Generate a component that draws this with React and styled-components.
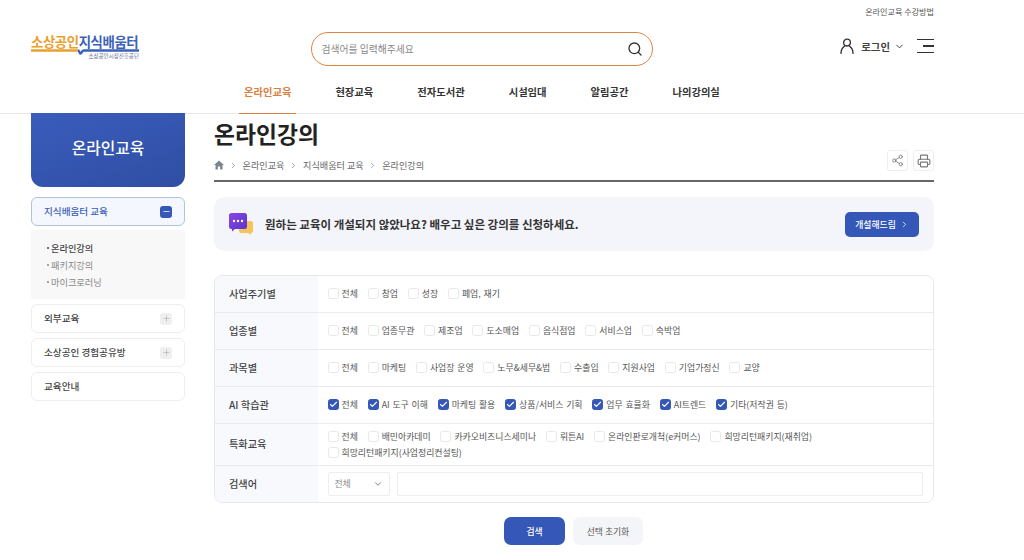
import styled, { createGlobalStyle } from "styled-components";
import { Search, ChevronDown, ChevronRight, Share2, Printer, Plus, Minus, Check } from "lucide-react";

const GlobalStyle = createGlobalStyle`
  html, body {
    margin: 0;
    padding: 0;
    background: #fff;
    font-family: "Noto Sans CJK KR", "Noto Sans", sans-serif;
    color: #333;
  }
  * { box-sizing: border-box; }
`;

const Page = styled.div`
  width: 1024px;
  height: 560px;
  overflow: hidden;
`;

const Header = styled.header`
  height: 114px;
  border-bottom: 1px solid #e9e9e9;
  padding: 0 90px 0 31px;
`;

const UtilRow = styled.div`
  height: 24px;
  padding-bottom: 1px;
  display: flex;
  justify-content: flex-end;
  align-items: center;
  font-size: 8.1px;
  color: #555;
`;

const TopRow = styled.div`
  display: flex;
  align-items: center;
  height: 44px;
  margin-top: 1px;
`;

const Logo = styled.div`
  width: 108px;
  display: flex;
  flex-direction: column;
`;

const LogoTitle = styled.div`
  font-size: 13.4px;
  line-height: 15px;
  font-weight: 700;
  letter-spacing: -0.4px;
  white-space: nowrap;
  color: #3a62b8;
  span { color: #e8a02e; }
`;

const LogoSub = styled.div`
  font-size: 5.5px;
  line-height: 7px;
  color: #5c6b94;
  text-align: right;
  margin-top: -4.5px;
`;

const SearchBox = styled.div`
  width: 342px;
  height: 34px;
  margin-left: 172px;
  margin-top: 4px;
  border: 1.6px solid #dc8445;
  border-radius: 17px;
  padding: 0 9px 0 9.5px;
  display: flex;
  align-items: center;
  justify-content: space-between;
  font-size: 9.8px;
  color: #888;
  svg { color: #333; }
`;

const UserArea = styled.div`
  margin-left: auto;
  margin-bottom: 2px;
  display: flex;
  align-items: center;
  font-size: 10.4px;
  font-weight: 700;
  color: #444;
`;

const LoginLabel = styled.span`
  margin-left: 7px;
  margin-right: 4px;
`;

const MenuButton = styled.div`
  width: 17px;
  height: 15px;
  margin-left: 12px;
  display: flex;
  flex-direction: column;
  justify-content: space-between;
  align-items: flex-end;
`;

const MenuLine = styled.i`
  display: block;
  height: 1.4px;
  background: #333;
  width: ${(p) => p.$w}px;
`;

const Nav = styled.nav`
  height: 45px;
  margin-left: 208px;
  display: flex;
  gap: 34px;
`;

const NavItem = styled.a`
  position: relative;
  padding: 0 5px;
  display: flex;
  align-items: center;
  height: 45px;
  font-size: 10.3px;
  font-weight: 700;
  color: ${(p) => (p.$active ? "#d9803f" : "#333")};
  ${(p) =>
    p.$active &&
    `&::after {
      content: "";
      position: absolute;
      left: 0;
      right: 0;
      bottom: 0;
      height: 1.5px;
      background: #d9803f;
    }`}
`;

const Body = styled.div`
  display: flex;
  padding-left: 31px;
  gap: 29px;
`;

const Sidebar = styled.aside`
  width: 154px;
  flex: none;
`;

const SideHero = styled.div`
  height: 74px;
  margin-top: -1px;
  padding-bottom: 6px;
  border-radius: 0 0 12px 12px;
  background: linear-gradient(160deg, #3a5cbc, #2f4ea3);
  color: #fff;
  display: flex;
  align-items: center;
  justify-content: center;
  font-size: 15.8px;
  font-weight: 500;
  margin-bottom: 10px;
`;

const SideItem = styled.div`
  height: 29px;
  margin-bottom: ${(p) => (p.$open ? 4 : 5)}px;
  padding: 0 12px 2px 12px;
  display: flex;
  align-items: center;
  justify-content: space-between;
  font-size: 9.6px;
  font-weight: 500;
  border-radius: 6px;
  border: 1px solid ${(p) => (p.$open ? "#b4c1de" : "#eeeeee")};
  background: ${(p) => (p.$open ? "#f4f7fd" : "#fff")};
  color: ${(p) => (p.$open ? "#3f62b8" : "#444")};
`;

const SideToggle = styled.span`
  width: 12px;
  height: 12px;
  border-radius: 3px;
  margin-top: 2px;
  display: flex;
  align-items: center;
  justify-content: center;
  background: ${(p) => (p.$open ? "#3557b7" : "#efefef")};
  color: ${(p) => (p.$open ? "#fff" : "#aaa")};
`;

const SubMenu = styled.ul`
  list-style: none;
  margin: 0 0 5px;
  padding: 9px 16px 9px;
  height: 69px;
  background: #f8f8f8;
`;

const SubItem = styled.li`
  height: 17px;
  display: flex;
  align-items: center;
  gap: 2px;
  font-size: 9.2px;
  font-weight: ${(p) => (p.$active ? 500 : 400)};
  color: ${(p) => (p.$active ? "#444" : "#888")};
  &::before {
    content: "";
    width: 2px;
    height: 2px;
    border-radius: 50%;
    background: currentColor;
  }
`;

const Main = styled.main`
  width: 720px;
  flex: none;
`;

const Title = styled.h1`
  margin: 0;
  height: 38px;
  display: flex;
  align-items: center;
  font-size: 22.8px;
  font-weight: 700;
  color: #222;
`;

const CrumbRow = styled.div`
  height: 30px;
  display: flex;
  align-items: center;
  justify-content: space-between;
  border-bottom: 2px solid #666;
  padding-bottom: 2px;
  margin-bottom: 15px;
`;

const Crumbs = styled.div`
  display: flex;
  align-items: center;
  gap: 4.8px;
  font-size: 9.1px;
  color: #666;
  svg { color: #888; }
`;

const Tools = styled.div`
  display: flex;
  gap: 5px;
  margin-top: -9px;
`;

const ToolButton = styled.span`
  width: 21px;
  height: 21px;
  border: 1px solid #eeeeee;
  border-radius: 3px;
  display: flex;
  align-items: center;
  justify-content: center;
  color: #777;
`;

const Banner = styled.div`
  height: 54px;
  background: #f4f5fa;
  border-radius: 10px;
  padding: 0 15px 0 14px;
  display: flex;
  align-items: center;
  margin-bottom: 24px;
`;

const BannerText = styled.p`
  margin: 0 0 0 11px;
  font-size: 11.5px;
  font-weight: 700;
  color: #333;
`;

const BannerButton = styled.a`
  margin-left: auto;
  width: 74px;
  height: 25px;
  border-radius: 5px;
  background: #3557b7;
  color: #fff;
  font-size: 8.8px;
  font-weight: 500;
  display: flex;
  align-items: center;
  justify-content: center;
  gap: 4px;
`;

const FilterTable = styled.div`
  border: 1px solid #e6e8ec;
  border-radius: 8px;
  overflow: hidden;
`;

const Row = styled.div`
  display: flex;
  height: ${(p) => p.$h || 37}px;
  border-bottom: ${(p) => (p.$last ? "none" : "1px solid #e9ebf0")};
`;

const RowLabel = styled.div`
  width: 102.5px;
  flex: none;
  background: #f7f9fd;
  padding: 0 0 2px 14px;
  display: flex;
  align-items: center;
  font-size: 10.2px;
  font-weight: 500;
  color: #444;
`;

const RowBody = styled.div`
  flex: 1;
  padding: 0 10px 1px;
  display: flex;
  flex-wrap: wrap;
  align-items: center;
  align-content: center;
  column-gap: 9.8px;
  row-gap: 0;
`;

const Option = styled.label`
  display: flex;
  align-items: center;
  gap: 3px;
  height: 16px;
  font-size: 8.9px;
  word-spacing: 0.8px;
  color: #555;
  white-space: nowrap;
`;

const Box = styled.span`
  width: 11px;
  height: 11px;
  border-radius: 2.5px;
  display: flex;
  align-items: center;
  justify-content: center;
  border: 1px solid ${(p) => (p.$checked ? "#3557b7" : "#e8e8e8")};
  background: ${(p) => (p.$checked ? "#3557b7" : "#fff")};
  color: #fff;
`;

const SearchFields = styled.div`
  width: 100%;
  display: flex;
  gap: 7px;
`;

const SelectBox = styled.div`
  width: 62px;
  height: 24px;
  border: 1px solid #eeeeee;
  border-radius: 2px;
  padding: 0 6px;
  display: flex;
  align-items: center;
  justify-content: space-between;
  font-size: 8.8px;
  color: #888;
  svg { color: #555; }
`;

const TextInput = styled.div`
  flex: 1;
  height: 24px;
  border: 1px solid #eeeeee;
  border-radius: 2px;
`;

const Actions = styled.div`
  display: flex;
  justify-content: center;
  gap: 8px;
  margin-top: 14px;
  padding-right: 1px;
`;

const ActionButton = styled.a`
  width: ${(p) => p.$w}px;
  height: 28px;
  border-radius: 7px;
  display: flex;
  align-items: center;
  justify-content: center;
  font-size: 8.8px;
  font-weight: ${(p) => (p.$primary ? 500 : 400)};
  background: ${(p) => (p.$primary ? "#3557b7" : "#f4f5f8")};
  color: ${(p) => (p.$primary ? "#fff" : "#555")};
`;

const LogoLine = () => (
  <svg width="108" height="9" viewBox="0 0 108 9">
    <path d="M0 1.500H47" stroke="#e8a02e" strokeWidth="2.4" fill="none" />
    <path d="M47 1.500c2 0 1 3 2.500 3s1-3 3.500-3h55" stroke="#3a62b8" strokeWidth="2.4" fill="none" />
  </svg>
);

const UserIcon = () => (
  <svg width="14" height="16" viewBox="0 0 14 16" fill="none" stroke="#333" strokeWidth="1.3">
    <circle cx="7" cy="4.600" r="3.400" />
    <path d="M1 15.500c0-4 2-6.400 3.600-7.400M13 15.500c0-4-2-6.400-3.600-7.400" strokeLinecap="round" />
  </svg>
);

const HomeIcon = () => (
  <svg width="10" height="10" viewBox="0 0 10 10" fill="#7c8691">
    <path d="M5 .6 0 5h1.500v4.400h2.400V6.500h2.200v2.900h2.400V5H10z" />
  </svg>
);

const ChatIcon = () => (
  <svg width="26" height="24" viewBox="0 0 26 24">
    <defs>
      <linearGradient id="chatGrad" x1="0" y1="0" x2="1" y2="1">
        <stop offset="0" stopColor="#8a45e6" />
        <stop offset="1" stopColor="#5a34c8" />
      </linearGradient>
    </defs>
    <path d="M15 9h8a2 2 0 0 1 2 2v8a2 2 0 0 1-2 2v2l-3-2h-7a2 2 0 0 1-2-2v-8a2 2 0 0 1 2-2z" fill="#f6c458" />
    <path d="M3.500 1h13A2.500 2.500 0 0 1 19 3.500v11a2.500 2.500 0 0 1-2.500 2.500H7l-3 2.500V17h-.5A2.500 2.500 0 0 1 1 14.500v-11A2.500 2.500 0 0 1 3.500 1z" fill="url(#chatGrad)" />
    <circle cx="6" cy="9" r="1.200" fill="#fff" />
    <circle cx="10" cy="9" r="1.200" fill="#fff" />
    <circle cx="14" cy="9" r="1.200" fill="#fff" />
  </svg>
);

const navItems = ["온라인교육", "현장교육", "전자도서관", "시설임대", "알림공간", "나의강의실"];

const filters = [
  { label: "사업주기별", options: ["전체", "창업", "성장", "폐업, 재기"] },
  { label: "업종별", options: ["전체", "업종무관", "제조업", "도소매업", "음식점업", "서비스업", "숙박업"] },
  { label: "과목별", options: ["전체", "마케팅", "사업장 운영", "노무&세무&법", "수출입", "지원사업", "기업가정신", "교양"] },
  {
    label: "AI 학습관",
    checked: true,
    options: ["전체", "AI 도구 이해", "마케팅 활용", "상품/서비스 기획", "업무 효율화", "AI트렌드", "기타(저작권 등)"],
  },
  {
    label: "특화교육",
    h: 42,
    options: [
      "전체",
      "배민아카데미",
      "카카오비즈니스세미나",
      "뤼튼AI",
      "온라인판로개척(e커머스)",
      "희망리턴패키지(재취업)",
      "희망리턴패키지(사업정리컨설팅)",
    ],
  },
];

export default function App() {
  return (
    <Page>
      <GlobalStyle />
      <Header>
        <UtilRow>온라인교육 수강방법</UtilRow>
        <TopRow>
          <Logo>
            <LogoTitle>
              <span>소상공인</span>지식배움터
            </LogoTitle>
            <LogoLine />
            <LogoSub>소상공인시장진흥공단</LogoSub>
          </Logo>
          <SearchBox>
            검색어를 입력해주세요
            <Search size={16} strokeWidth={2} />
          </SearchBox>
          <UserArea>
            <UserIcon />
            <LoginLabel>로그인</LoginLabel>
            <ChevronDown size={11} strokeWidth={2} color="#333" />
            <MenuButton>
              <MenuLine $w={17} />
              <MenuLine $w={11} />
              <MenuLine $w={17} />
            </MenuButton>
          </UserArea>
        </TopRow>
        <Nav>
          {navItems.map((item, i) => (
            <NavItem key={item} $active={i === 0}>
              {item}
            </NavItem>
          ))}
        </Nav>
      </Header>
      <Body>
        <Sidebar>
          <SideHero>온라인교육</SideHero>
          <SideItem $open>
            지식배움터 교육
            <SideToggle $open>
              <Minus size={9} strokeWidth={2} />
            </SideToggle>
          </SideItem>
          <SubMenu>
            <SubItem $active>온라인강의</SubItem>
            <SubItem>패키지강의</SubItem>
            <SubItem>마이크로러닝</SubItem>
          </SubMenu>
          <SideItem>
            외부교육
            <SideToggle>
              <Plus size={9} strokeWidth={1.5} />
            </SideToggle>
          </SideItem>
          <SideItem>
            소상공인 경험공유방
            <SideToggle>
              <Plus size={9} strokeWidth={1.5} />
            </SideToggle>
          </SideItem>
          <SideItem>교육안내</SideItem>
        </Sidebar>
        <Main>
          <Title>온라인강의</Title>
          <CrumbRow>
            <Crumbs>
              <HomeIcon />
              <ChevronRight size={9} />
              온라인교육
              <ChevronRight size={9} />
              지식배움터 교육
              <ChevronRight size={9} />
              온라인강의
            </Crumbs>
            <Tools>
              <ToolButton>
                <Share2 size={13} strokeWidth={1.5} />
              </ToolButton>
              <ToolButton>
                <Printer size={14} strokeWidth={1.9} />
              </ToolButton>
            </Tools>
          </CrumbRow>
          <Banner>
            <ChatIcon />
            <BannerText>원하는 교육이 개설되지 않았나요? 배우고 싶은 강의를 신청하세요.</BannerText>
            <BannerButton>
              개설해드림
              <ChevronRight size={9} strokeWidth={2} />
            </BannerButton>
          </Banner>
          <FilterTable>
            {filters.map((row) => (
              <Row key={row.label} $h={row.h}>
                <RowLabel>{row.label}</RowLabel>
                <RowBody>
                  {row.options.map((option) => (
                    <Option key={option}>
                      <Box $checked={row.checked}>
                        {row.checked && <Check size={9} strokeWidth={3} />}
                      </Box>
                      {option}
                    </Option>
                  ))}
                </RowBody>
              </Row>
            ))}
            <Row $last $h={36}>
              <RowLabel>검색어</RowLabel>
              <RowBody>
                <SearchFields>
                  <SelectBox>
                    전체
                    <ChevronDown size={10} strokeWidth={1.8} />
                  </SelectBox>
                  <TextInput />
                </SearchFields>
              </RowBody>
            </Row>
          </FilterTable>
          <Actions>
            <ActionButton $primary $w={61}>
              검색
            </ActionButton>
            <ActionButton $w={70}>선택 초기화</ActionButton>
          </Actions>
        </Main>
      </Body>
    </Page>
  );
}
